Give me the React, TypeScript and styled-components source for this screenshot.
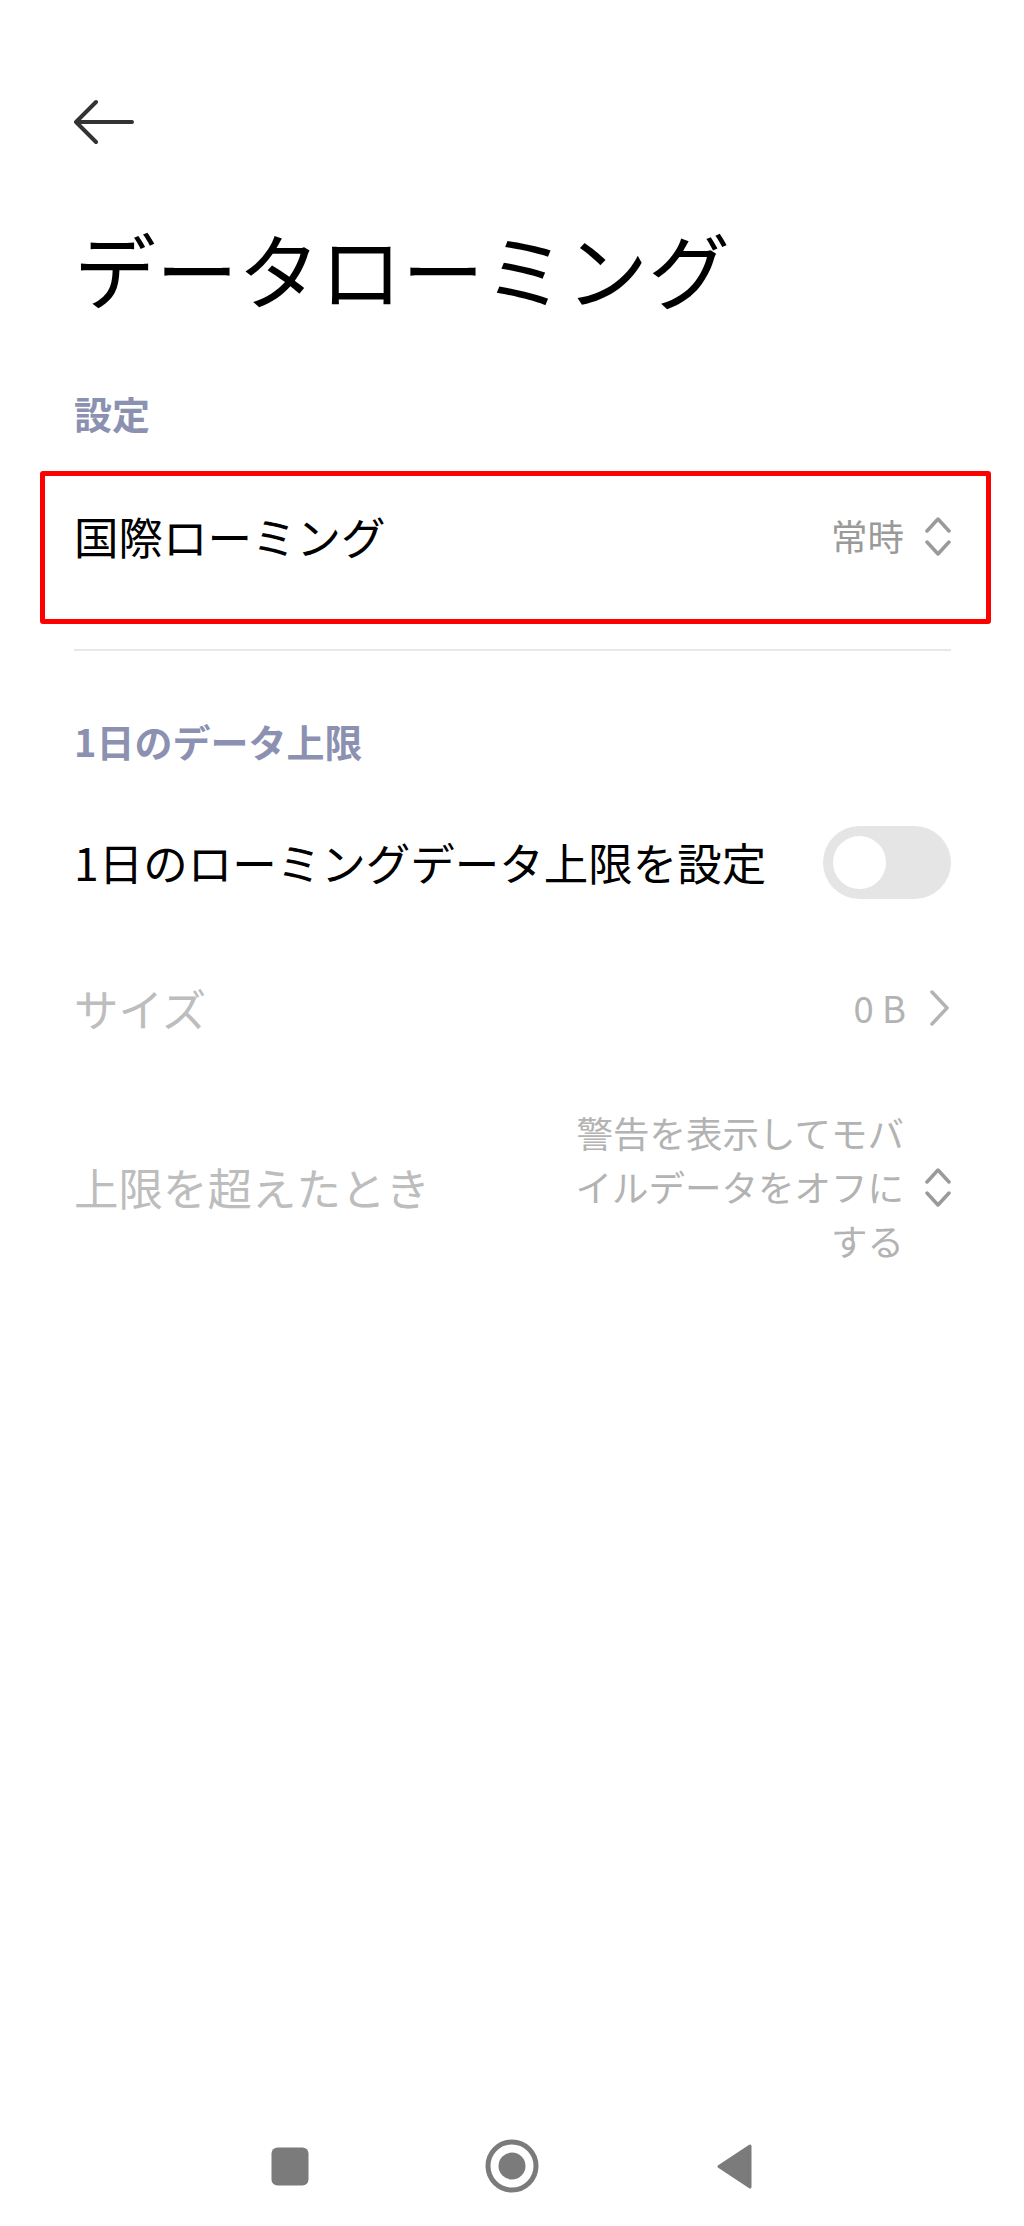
import styled, { createGlobalStyle } from 'styled-components';

const GlobalStyle = createGlobalStyle`
  html, body {
    margin: 0;
    padding: 0;
    background: #ffffff;
  }
  body {
    font-family: "Noto Sans CJK JP", "Noto Sans", sans-serif;
    color: #000000;
  }
`;

const Screen = styled.div`
  width: 1024px;
  min-height: 2226px;
  display: flex;
  flex-direction: column;
  background: #ffffff;
`;

const Content = styled.main`
  display: flex;
  flex-direction: column;
  padding: 92px 73px 0 74px;
`;

const BackButton = styled.button`
  width: 60px;
  height: 60px;
  padding: 0;
  border: 0;
  background: none;
  display: flex;
  cursor: pointer;
`;

const Title = styled.h1`
  margin: 66px 0 70px;
  font-size: 82px;
  line-height: 100px;
  font-weight: 400;
  color: #000000;
`;

const SectionHeader = styled.h2`
  margin: 0 0 23px;
  font-size: 38px;
  line-height: 50px;
  font-weight: 700;
  color: #8c91b1;
`;

const Row = styled.div<{ $highlighted?: boolean }>`
  display: flex;
  align-items: center;
  justify-content: space-between;
  gap: 24px;
  box-sizing: border-box;
  min-height: ${(p) => (p.$highlighted ? '153px' : '146px')};
  margin: ${(p) => (p.$highlighted ? '10px -40px 0 -34px' : '0')};
  padding: ${(p) => (p.$highlighted ? '0 35px 23px 29px' : '25px 0')};
  border: ${(p) => (p.$highlighted ? '5px solid #ff0000' : '0')};
  border-radius: ${(p) => (p.$highlighted ? '3px' : '0')};
`;

const Label = styled.span<{ $disabled?: boolean }>`
  font-size: 44.5px;
  line-height: 60px;
  white-space: nowrap;
  color: ${(p) => (p.$disabled ? '#bdbdbd' : '#000000')};
`;

const Value = styled.div`
  display: flex;
  align-items: center;
  gap: 21px;
`;

const ValueText = styled.span<{ $disabled?: boolean }>`
  max-width: 332px;
  font-size: 36.5px;
  line-height: 54px;
  text-align: right;
  color: ${(p) => (p.$disabled ? '#b3b3b3' : '#9a9a9a')};
`;

const Divider = styled.hr`
  margin: 25px 0 65px;
  height: 2px;
  border: 0;
  background: #e8e8e8;
`;

const Toggle = styled.span`
  position: relative;
  flex: none;
  width: 128px;
  height: 73px;
  border-radius: 37px;
  background: #e5e5e5;

  &::after {
    content: '';
    position: absolute;
    left: 10px;
    top: 10px;
    width: 53px;
    height: 53px;
    border-radius: 50%;
    background: #ffffff;
  }
`;

const NavBar = styled.nav`
  margin-top: auto;
  height: 120px;
  display: grid;
  grid-template-columns: repeat(3, 222px);
  justify-content: center;
  justify-items: center;
  align-items: center;
`;

const NavButton = styled.button`
  padding: 0;
  border: 0;
  background: none;
  display: flex;
  cursor: pointer;
`;

const navGray = '#7b7b7b';

const ChevronUpDown = () => (
  <svg width="26" height="40" viewBox="0 0 26 40" fill="none">
    <polyline
      points="2,15 13,3 24,15"
      stroke="#9a9a9a"
      strokeWidth="3.5"
      strokeLinecap="round"
      strokeLinejoin="round"
    />
    <polyline
      points="2,26 13,38 24,26"
      stroke="#9a9a9a"
      strokeWidth="3.5"
      strokeLinecap="round"
      strokeLinejoin="round"
    />
  </svg>
);

const ChevronRight = () => (
  <svg width="24" height="38" viewBox="0 0 24 38" fill="none">
    <polyline
      points="5,3 20,19 5,35"
      stroke="#b3b3b3"
      strokeWidth="3.5"
      strokeLinecap="round"
      strokeLinejoin="round"
    />
  </svg>
);

export default function App() {
  return (
    <>
      <GlobalStyle />
      <Screen>
        <Content>
          <BackButton aria-label="戻る">
            <svg width="60" height="60" viewBox="0 0 60 60" fill="none">
              <path
                d="M58 30H3M22 10L2 30L22 50"
                stroke="#333333"
                strokeWidth="4"
                strokeLinecap="round"
                strokeLinejoin="round"
              />
            </svg>
          </BackButton>

          <Title>データローミング</Title>

          <SectionHeader>設定</SectionHeader>
          <Row $highlighted>
            <Label>国際ローミング</Label>
            <Value>
              <ValueText>常時</ValueText>
              <ChevronUpDown />
            </Value>
          </Row>

          <Divider />

          <SectionHeader>1日のデータ上限</SectionHeader>
          <Row>
            <Label>1日のローミングデータ上限を設定</Label>
            <Toggle role="switch" aria-checked="false" />
          </Row>
          <Row>
            <Label $disabled>サイズ</Label>
            <Value>
              <ValueText $disabled>0 B</ValueText>
              <ChevronRight />
            </Value>
          </Row>
          <Row>
            <Label $disabled>上限を超えたとき</Label>
            <Value>
              <ValueText $disabled>警告を表示してモバイルデータをオフにする</ValueText>
              <ChevronUpDown />
            </Value>
          </Row>
        </Content>

        <NavBar>
          <NavButton aria-label="最近">
            <svg width="38" height="39" viewBox="0 0 38 39">
              <rect x="0.5" y="0.5" width="37" height="38" rx="6" fill={navGray} />
            </svg>
          </NavButton>
          <NavButton aria-label="ホーム">
            <svg width="54" height="54" viewBox="0 0 54 54" fill="none">
              <circle cx="27" cy="27" r="24" stroke={navGray} strokeWidth="5" />
              <circle cx="27" cy="27" r="13.5" fill={navGray} />
            </svg>
          </NavButton>
          <NavButton aria-label="戻る">
            <svg width="37" height="47" viewBox="0 0 37 47">
              <path
                d="M34 3L34 44L3 23.5Z"
                fill={navGray}
                stroke={navGray}
                strokeWidth="3"
                strokeLinejoin="round"
              />
            </svg>
          </NavButton>
        </NavBar>
      </Screen>
    </>
  );
}
